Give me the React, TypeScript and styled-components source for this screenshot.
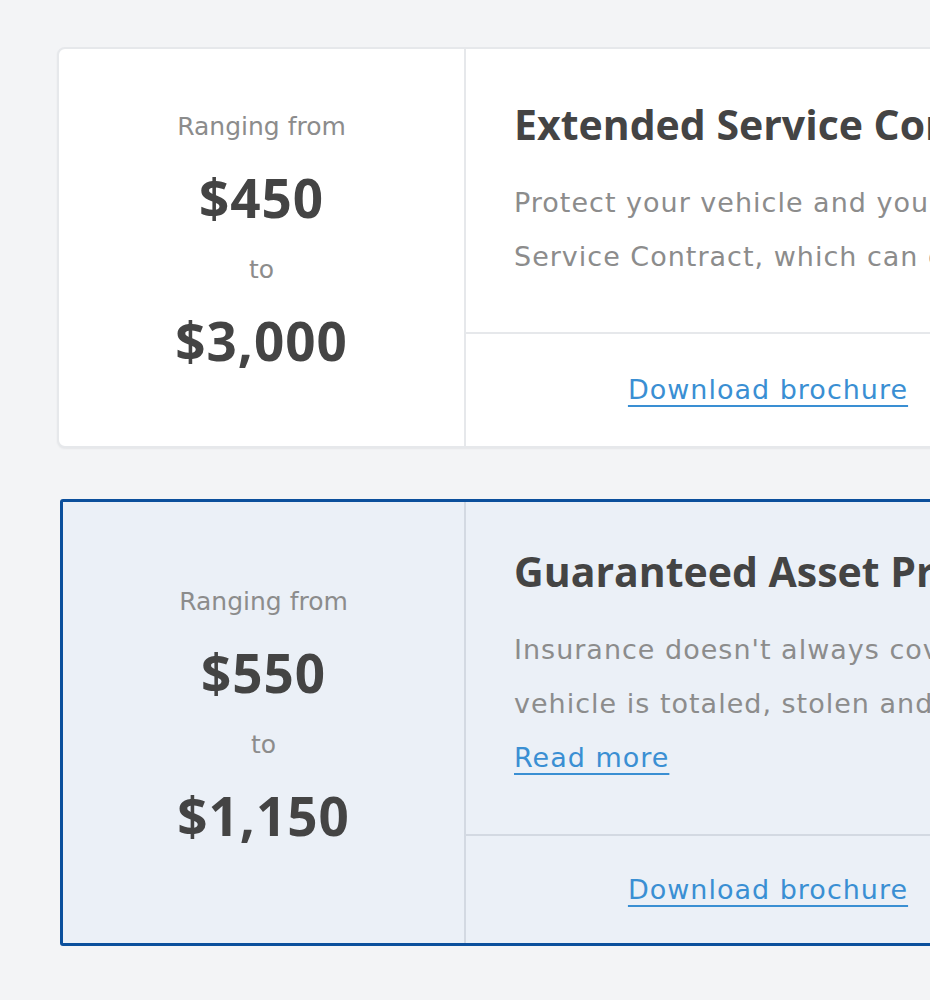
import React from 'react'
import styled, { createGlobalStyle, css } from 'styled-components'

const GlobalStyle = createGlobalStyle`
  html, body {
    margin: 0;
    padding: 0;
    background: #f3f4f6;
    overflow: hidden;
  }
  body {
    font-family: 'DejaVu Sans', 'Open Sans', sans-serif;
  }
`

const products = [
  {
    id: 'esc',
    from: '$450',
    to: '$3,000',
    title: 'Extended Service Contract',
    lines: [
      'Protect your vehicle and your wallet with an Extended',
      'Service Contract, which can cover costly repairs.',
    ],
    readMore: false,
    highlight: false,
  },
  {
    id: 'gap',
    from: '$550',
    to: '$1,150',
    title: 'Guaranteed Asset Protection',
    lines: [
      "Insurance doesn't always cover the full loan if your",
      'vehicle is totaled, stolen and not recovered.',
    ],
    readMore: true,
    highlight: true,
  },
]

export default function App() {
  return (
    <>
      <GlobalStyle />
      <Page>
        {products.map(p => (
          <Card key={p.id} $highlight={p.highlight}>
            <PriceColumn $highlight={p.highlight}>
              <Caption>Ranging from</Caption>
              <Price>{p.from}</Price>
              <Caption>to</Caption>
              <Price>{p.to}</Price>
            </PriceColumn>

            <InfoColumn>
              <Body $highlight={p.highlight}>
                <Title>{p.title}</Title>
                <Text>
                  {p.lines.map((line, i) => (
                    <Line key={i}>{line}</Line>
                  ))}
                </Text>
                {p.readMore && <Link href="#">Read more</Link>}
              </Body>

              <Footer $highlight={p.highlight}>
                <Link href="#">Download brochure</Link>
              </Footer>
            </InfoColumn>
          </Card>
        ))}
      </Page>
    </>
  )
}

const Page = styled.div`
  display: flex;
  flex-flow: column;
  gap: 51px;
  padding: 47px 0 0;
  width: 1200px;
`

const Card = styled.div<{ $highlight: boolean }>`
  display: flex;
  align-self: flex-start;
  background: #fff;
  border: 2px solid #e6e8eb;
  border-radius: 8px;
  box-shadow: 0 1px 2px rgba(0, 0, 0, 0.06);
  margin-left: 57px;

  ${p =>
    p.$highlight &&
    css`
      background: #ebf0f7;
      border: 3px solid #0b4f9c;
      border-radius: 3px;
      box-shadow: none;
      margin-left: 60px;
    `}
`

const PriceColumn = styled.div<{ $highlight: boolean }>`
  display: flex;
  flex-flow: column;
  align-items: center;
  justify-content: center;
  flex: 0 0 ${p => (p.$highlight ? 403 : 407)}px;
  border-right: 2px solid ${p => (p.$highlight ? '#d3d9e2' : '#e6e8eb')};
  padding-bottom: 28px;
  box-sizing: border-box;
`

const Caption = styled.div`
  font-size: 25px;
  line-height: 71px;
  color: #8c8c8c;
`

const Price = styled.div`
  font-family: 'Open Sans', sans-serif;
  font-size: 53px;
  font-weight: 700;
  line-height: 72px;
  letter-spacing: 1px;
  color: #444;
`

const InfoColumn = styled.div`
  display: flex;
  flex-flow: column;
  width: 604px;
`

const Body = styled.div<{ $highlight: boolean }>`
  padding: ${p => (p.$highlight ? '42px 48px 49px' : '48px 48px 48px')};
  border-bottom: 2px solid ${p => (p.$highlight ? '#d3d9e2' : '#e6e8eb')};
`

const Title = styled.h2`
  margin: 0 0 24px;
  font-family: 'Open Sans', sans-serif;
  font-size: 41px;
  font-weight: 700;
  line-height: 55px;
  color: #444;
  white-space: nowrap;
`

const Text = styled.p`
  margin: 0;
  font-size: 27px;
  line-height: 54px;
  letter-spacing: 1px;
  color: #8c8c8c;
`

const Line = styled.span`
  display: block;
  white-space: nowrap;
`

const Link = styled.a`
  display: inline-block;
  font-size: 27px;
  line-height: 54px;
  letter-spacing: 1px;
  color: #3a8fd3;
  text-decoration: underline;
  text-decoration-thickness: 2px;
  text-underline-offset: 6px;
  white-space: nowrap;
`

const Footer = styled.div<{ $highlight: boolean }>`
  display: flex;
  justify-content: center;
  align-items: center;
  height: ${p => (p.$highlight ? 107 : 112)}px;
`
